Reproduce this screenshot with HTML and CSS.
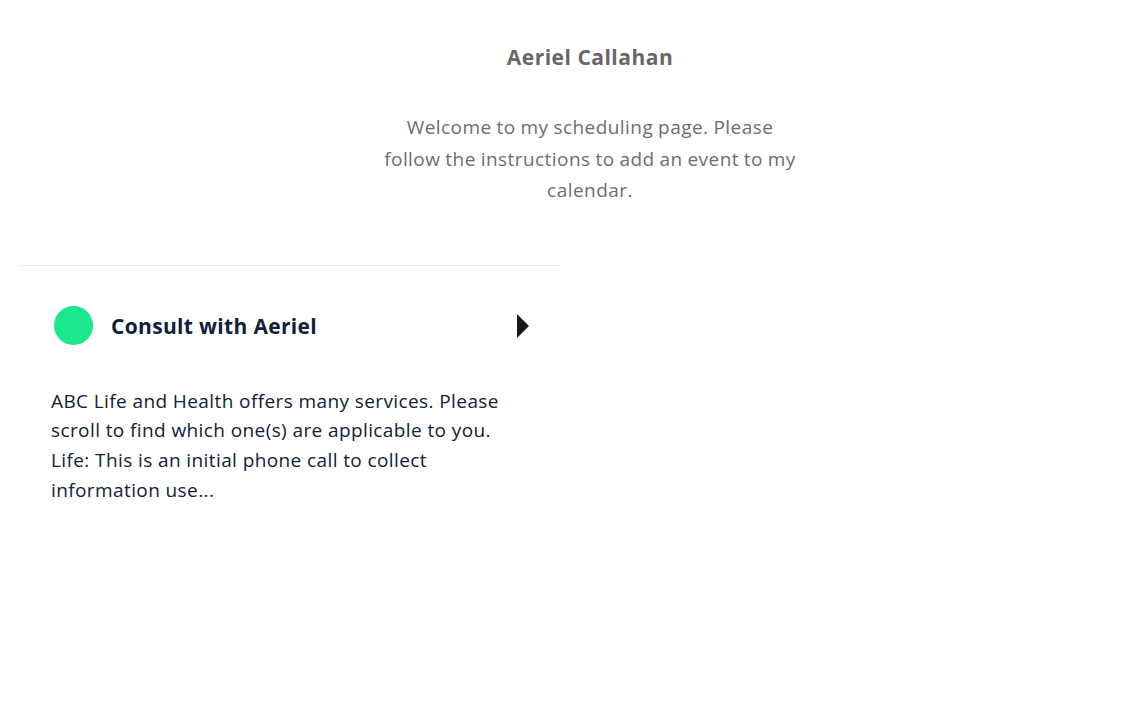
FILE: index.html
```html
<!DOCTYPE html>
<html lang="en">
<head>
<meta charset="utf-8">
<title>Aeriel Callahan</title>
<link rel="stylesheet" href="styles.css">
</head>
<body>
<div class="page">
  <header class="profile">
    <h1 class="profile-name">Aeriel Callahan</h1>
    <p class="profile-welcome">Welcome to my scheduling page. Please follow the instructions to add an event to my calendar.</p>
  </header>
  <section class="event-list">
    <div class="event-card">
      <div class="event-head">
        <span class="event-dot"></span>
        <h2 class="event-title">Consult with Aeriel</h2>
        <svg class="event-arrow" width="12" height="24" viewBox="0 0 12 24"><path d="M0 0 L12 12 L0 24 Z" fill="#1a1a1a"/></svg>
      </div>
      <p class="event-desc">ABC Life and Health offers many services. Please scroll to find which one(s) are applicable to you. Life: This is an initial phone call to collect information use...</p>
    </div>
  </section>
</div>
</body>
</html>
```
FILE: styles.css
```css
html, body {
  margin: 0;
  padding: 0;
  background: #fff;
}
body {
  font-family: "Open Sans", "Lato", sans-serif;
}
.page {
  width: 1128px;
}
.profile {
  display: flex;
  flex-direction: column;
  align-items: center;
  padding: 43px 0 0 52px;
}
.profile-name {
  margin: 0;
  font-size: 21px;
  line-height: 28px;
  font-weight: 700;
  letter-spacing: 0.5px;
  color: #676767;
}
.profile-welcome {
  margin: 41px 0 0;
  width: 418px;
  text-align: center;
  font-size: 19px;
  letter-spacing: 0.45px;
  word-spacing: -0.5px;
  line-height: 31.5px;
  color: #6d6d6d;
}
.event-list {
  margin-top: 58px;
  padding: 0 20px;
  display: grid;
  grid-template-columns: 540px 1fr;
}
.event-card {
  border-top: 1px solid #e6e6e6;
}
.event-head {
  display: flex;
  align-items: center;
  padding: 41px 31px 0 34px;
  height: 38px;
}
.event-dot {
  width: 39px;
  height: 39px;
  border-radius: 50%;
  background: #1ae88a;
  flex: none;
}
.event-title {
  margin: 0 0 0 18px;
  flex: 1;
  font-size: 21px;
  font-weight: 700;
  letter-spacing: 0.33px;
  color: #0e2138;
}
.event-arrow {
  flex: none;
}
.event-desc {
  margin: 42px 0 0 31px;
  width: 465px;
  font-size: 19px;
  letter-spacing: 0.4px;
  line-height: 29.7px;
  color: #0e2138;
}
```
